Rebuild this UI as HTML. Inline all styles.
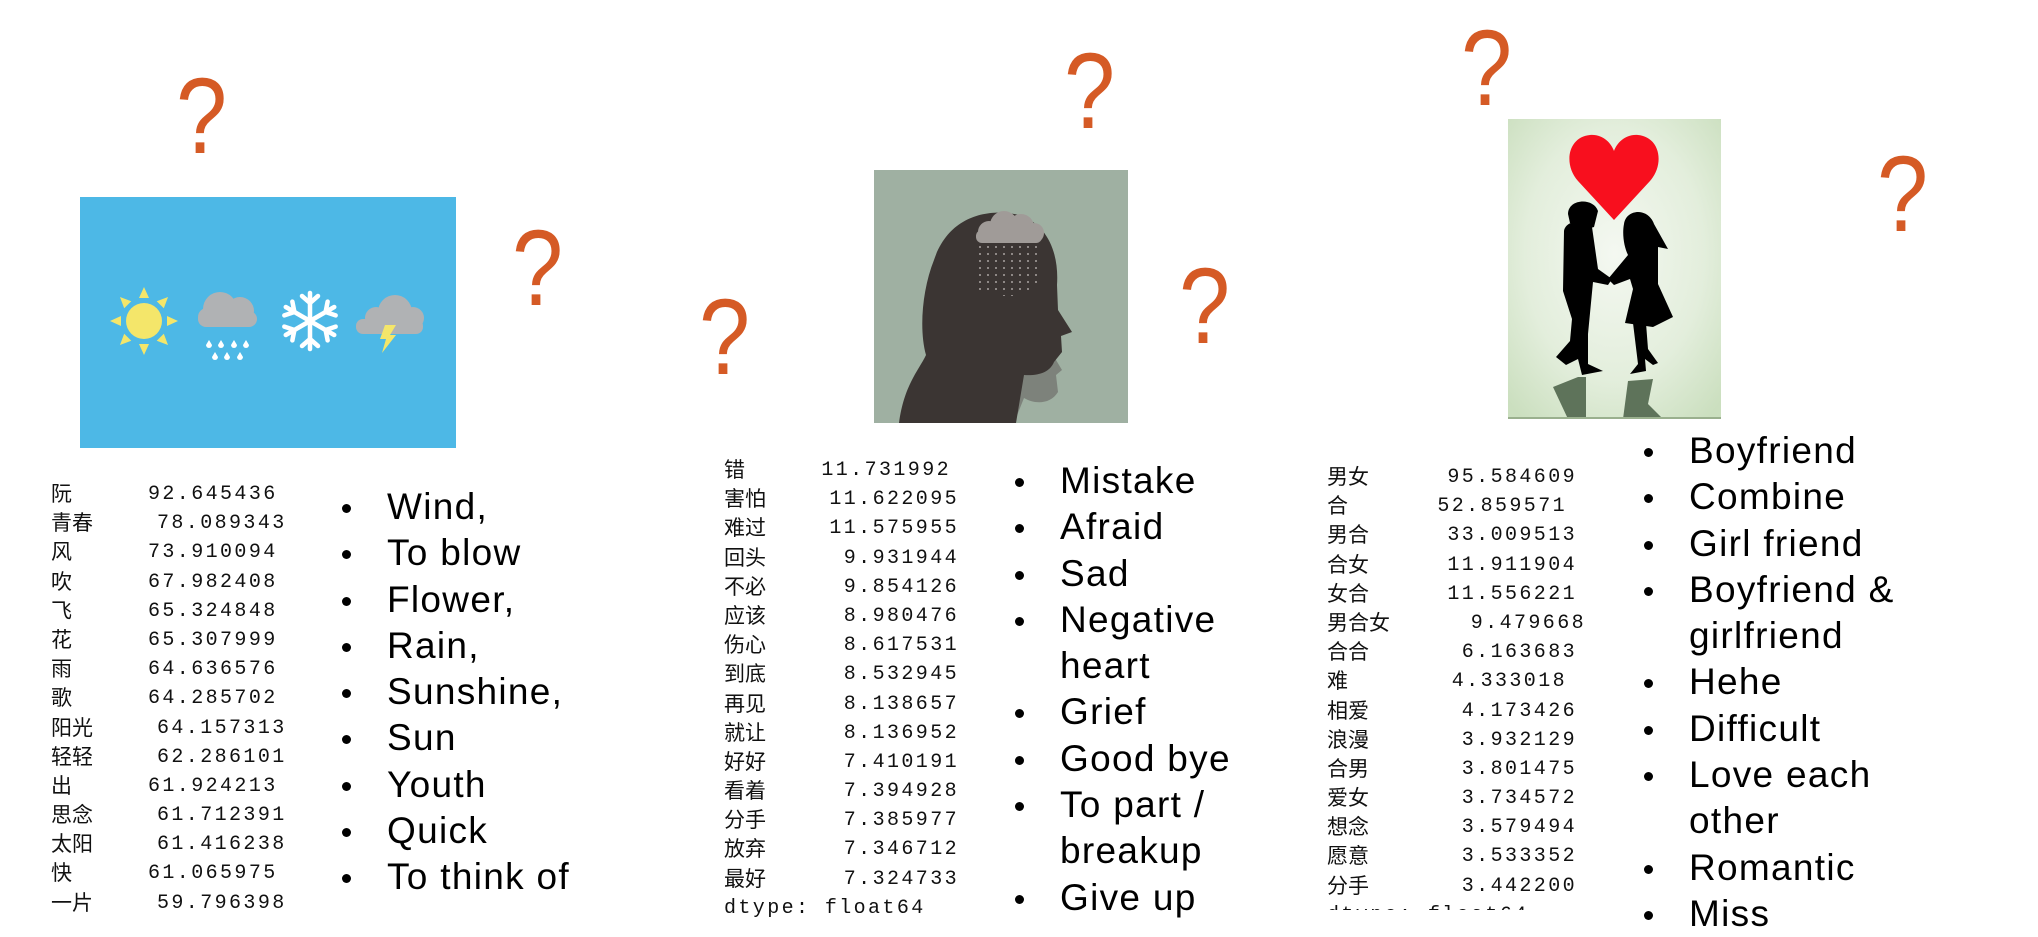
<!DOCTYPE html>
<html><head><meta charset="utf-8"><style>
html,body{margin:0;padding:0;background:#fff;}
body{width:2038px;height:934px;position:relative;overflow:hidden;}
.q{position:absolute;font-family:"Liberation Sans",sans-serif;font-size:108px;color:#d55a25;line-height:1;transform:scaleX(0.85);transform-origin:left top;}
.tbl{position:absolute;font-size:20px;line-height:29.2px;color:#111;}
.tbl div{position:relative;height:29.2px;white-space:nowrap;}
.tbl .c{position:absolute;left:0;font-family:"Liberation Sans","Noto Sans CJK SC",sans-serif;font-size:21px;}
.tbl .n{position:absolute;font-family:"Liberation Mono",monospace;font-size:20px;letter-spacing:2.4px;}
.b{position:absolute;font-family:"Liberation Sans",sans-serif;font-size:37px;color:#000;line-height:46.3px;letter-spacing:1.3px;}
.b div{position:relative;padding-left:45px;height:46.3px;white-space:nowrap;}
.b .d::before{content:"";position:absolute;left:0;top:20px;width:9px;height:9px;border-radius:50%;background:#000;}
</style></head><body>

<div class="q" style="left:176px;top:62px;">?</div>
<div class="q" style="left:512px;top:214px;">?</div>
<div class="q" style="left:699px;top:283px;">?</div>
<div class="q" style="left:1064px;top:37px;">?</div>
<div class="q" style="left:1179px;top:252px;">?</div>
<div class="q" style="left:1461px;top:14px;">?</div>
<div class="q" style="left:1877px;top:140px;">?</div>

<!-- weather -->
<svg style="position:absolute;left:80px;top:197px" width="376" height="251" viewBox="0 0 376 251">
<rect width="376" height="251" fill="#4db8e6"/>
<g transform="translate(64,124)" fill="#f4e66a">
<circle r="18"/>
<g id="ray"><polygon points="-5,-23 5,-23 0,-34"/></g>
<use href="#ray" transform="rotate(45)"/><use href="#ray" transform="rotate(90)"/><use href="#ray" transform="rotate(135)"/>
<use href="#ray" transform="rotate(180)"/><use href="#ray" transform="rotate(225)"/><use href="#ray" transform="rotate(270)"/><use href="#ray" transform="rotate(315)"/>
</g>
<g fill="#b0b2b4">
<circle cx="140" cy="112" r="17"/><circle cx="160" cy="114" r="14"/><circle cx="127" cy="120" r="9"/>
<rect x="118" y="114" width="59" height="16" rx="8"/>
<circle cx="315" cy="115" r="17"/><circle cx="333" cy="121" r="11"/><circle cx="296" cy="121" r="11"/>
<rect x="276" y="122" width="67" height="15" rx="7"/>
</g>
<g fill="#fff">
<path d="M129,143 l3,5 a3,3 0 1 1 -6,0 z"/><path d="M141,143 l3,5 a3,3 0 1 1 -6,0 z"/><path d="M154,143 l3,5 a3,3 0 1 1 -6,0 z"/><path d="M166,143 l3,5 a3,3 0 1 1 -6,0 z"/>
<path d="M135,155 l3,5 a3,3 0 1 1 -6,0 z"/><path d="M147,155 l3,5 a3,3 0 1 1 -6,0 z"/><path d="M160,155 l3,5 a3,3 0 1 1 -6,0 z"/>
</g>
<polygon points="305,128 316,128 310,138 316,138 302,156 306,142 300,142" fill="#f4e66a"/>
<g transform="translate(230,124)" stroke="#fff" stroke-width="4.5" stroke-linecap="round" fill="none">
<g id="arm"><line x1="0" y1="0" x2="0" y2="-28"/><polyline points="-8,-25 0,-18 8,-25"/></g>
<use href="#arm" transform="rotate(60)"/><use href="#arm" transform="rotate(120)"/><use href="#arm" transform="rotate(180)"/><use href="#arm" transform="rotate(240)"/><use href="#arm" transform="rotate(300)"/>
</g>
</svg>

<!-- head -->
<svg style="position:absolute;left:874px;top:170px" width="254" height="253" viewBox="0 0 254 253">
<rect width="254" height="253" fill="#9fb0a2"/>
<path d="M150,120 C170,130 180,160 176,180 L188,200 L182,205 L184,222 C176,235 160,234 150,228 L140,253 L80,253 Z" fill="#7d827b"/>
<path d="M25,253 C30,215 45,200 52,185 C45,160 48,120 60,90 C75,45 115,38 145,45 C175,55 185,85 183,115 L184,140 L198,162 L187,166 L188,182 L180,192 C176,202 165,206 150,205 L142,253 Z" fill="#3b3533"/>
<g fill="#a09b98"><circle cx="115" cy="62" r="11"/><circle cx="130" cy="55" r="14"/><circle cx="147" cy="57" r="13"/><circle cx="160" cy="63" r="10"/><rect x="102" y="60" width="66" height="13" rx="6"/></g>
<g stroke="#a9a4a1" stroke-width="1.5" stroke-dasharray="2 5"><line x1="106" y1="76" x2="106" y2="120"/><line x1="114" y1="76" x2="114" y2="122"/><line x1="122" y1="76" x2="122" y2="124"/><line x1="130" y1="76" x2="130" y2="126"/><line x1="138" y1="76" x2="138" y2="126"/><line x1="146" y1="76" x2="146" y2="124"/><line x1="154" y1="76" x2="154" y2="122"/><line x1="162" y1="76" x2="162" y2="114"/></g>
</svg>

<!-- love -->
<svg style="position:absolute;left:1508px;top:119px" width="213" height="300" viewBox="0 0 213 300">
<defs><radialGradient id="g" cx="50%" cy="45%" r="70%"><stop offset="0" stop-color="#f4f8f1"/><stop offset="0.6" stop-color="#e3eedc"/><stop offset="1" stop-color="#cbdfbf"/></radialGradient></defs>
<rect width="213" height="300" fill="url(#g)"/>
<path d="M106,101 L70,62 C55,45 60,18 82,16 C95,15 103,24 106,32 C109,24 117,15 130,16 C152,18 157,45 142,62 Z" fill="#f80f1e"/>
<g fill="#000">
<path d="M60,95 C60,80 85,78 90,92 L86,108 C80,110 70,108 62,104 Z"/>
<path d="M56,112 C58,100 80,100 84,108 L90,150 L104,160 L100,166 L85,163 L80,215 L80,245 L95,252 L74,256 L70,240 L58,246 L48,238 L62,222 L64,200 L55,172 Z"/>
<path d="M116,105 C118,90 140,88 146,105 L160,130 L150,128 L150,165 L165,198 L145,208 L117,204 L125,170 L122,160 L106,166 L100,160 L120,136 C116,128 114,115 116,105 Z"/>
<path d="M125,204 L130,245 L122,255 L138,252 L137,240 L145,246 L150,244 L140,230 L138,204 Z"/>
</g>
<g fill="#5e735a"><path d="M45,268 L70,258 L78,258 L78,300 L60,300 Z"/><path d="M120,262 L145,260 L140,285 L155,300 L115,300 Z"/></g>
<rect y="298" width="213" height="2" fill="#9ab08e"/>
</svg>

<!-- left table -->
<div class="tbl" style="left:51px;top:480px;">
<div><span class="c">阮</span><span class="n" style="left:97px">92.645436</span></div>
<div><span class="c">青春</span><span class="n" style="left:106px">78.089343</span></div>
<div><span class="c">风</span><span class="n" style="left:97px">73.910094</span></div>
<div><span class="c">吹</span><span class="n" style="left:97px">67.982408</span></div>
<div><span class="c">飞</span><span class="n" style="left:97px">65.324848</span></div>
<div><span class="c">花</span><span class="n" style="left:97px">65.307999</span></div>
<div><span class="c">雨</span><span class="n" style="left:97px">64.636576</span></div>
<div><span class="c">歌</span><span class="n" style="left:97px">64.285702</span></div>
<div><span class="c">阳光</span><span class="n" style="left:106px">64.157313</span></div>
<div><span class="c">轻轻</span><span class="n" style="left:106px">62.286101</span></div>
<div><span class="c">出</span><span class="n" style="left:97px">61.924213</span></div>
<div><span class="c">思念</span><span class="n" style="left:106px">61.712391</span></div>
<div><span class="c">太阳</span><span class="n" style="left:106px">61.416238</span></div>
<div><span class="c">快</span><span class="n" style="left:97px">61.065975</span></div>
<div><span class="c">一片</span><span class="n" style="left:106px">59.796398</span></div>
</div>

<div class="b" style="left:342px;top:484px;">
<div class="d">Wind,</div><div class="d">To blow</div><div class="d">Flower,</div><div class="d">Rain,</div><div class="d">Sunshine,</div><div class="d">Sun</div><div class="d">Youth</div><div class="d">Quick</div><div class="d">To think of</div>
</div>

<!-- middle table -->
<div class="tbl" style="left:724px;top:456px;width:235px;">
<div><span class="c">错</span><span class="n" style="right:8px">11.731992</span></div>
<div><span class="c">害怕</span><span class="n" style="right:0">11.622095</span></div>
<div><span class="c">难过</span><span class="n" style="right:0">11.575955</span></div>
<div><span class="c">回头</span><span class="n" style="right:0">9.931944</span></div>
<div><span class="c">不必</span><span class="n" style="right:0">9.854126</span></div>
<div><span class="c">应该</span><span class="n" style="right:0">8.980476</span></div>
<div><span class="c">伤心</span><span class="n" style="right:0">8.617531</span></div>
<div><span class="c">到底</span><span class="n" style="right:0">8.532945</span></div>
<div><span class="c">再见</span><span class="n" style="right:0">8.138657</span></div>
<div><span class="c">就让</span><span class="n" style="right:0">8.136952</span></div>
<div><span class="c">好好</span><span class="n" style="right:0">7.410191</span></div>
<div><span class="c">看着</span><span class="n" style="right:0">7.394928</span></div>
<div><span class="c">分手</span><span class="n" style="right:0">7.385977</span></div>
<div><span class="c">放弃</span><span class="n" style="right:0">7.346712</span></div>
<div><span class="c">最好</span><span class="n" style="right:0">7.324733</span></div>
<div><span class="n" style="left:0">dtype: float64</span></div>
</div>

<div class="b" style="left:1015px;top:458px;">
<div class="d">Mistake</div><div class="d">Afraid</div><div class="d">Sad</div><div class="d">Negative</div><div>heart</div><div class="d">Grief</div><div class="d">Good bye</div><div class="d">To part /</div><div>breakup</div><div class="d">Give up</div>
</div>

<!-- right table -->
<div class="tbl" style="left:1327px;top:463px;width:250px;">
<div><span class="c">男女</span><span class="n" style="right:0">95.584609</span></div>
<div><span class="c">合</span><span class="n" style="right:10px">52.859571</span></div>
<div><span class="c">男合</span><span class="n" style="right:0">33.009513</span></div>
<div><span class="c">合女</span><span class="n" style="right:0">11.911904</span></div>
<div><span class="c">女合</span><span class="n" style="right:0">11.556221</span></div>
<div><span class="c">男合女</span><span class="n" style="right:-9px">9.479668</span></div>
<div><span class="c">合合</span><span class="n" style="right:0">6.163683</span></div>
<div><span class="c">难</span><span class="n" style="right:10px">4.333018</span></div>
<div><span class="c">相爱</span><span class="n" style="right:0">4.173426</span></div>
<div><span class="c">浪漫</span><span class="n" style="right:0">3.932129</span></div>
<div><span class="c">合男</span><span class="n" style="right:0">3.801475</span></div>
<div><span class="c">爱女</span><span class="n" style="right:0">3.734572</span></div>
<div><span class="c">想念</span><span class="n" style="right:0">3.579494</span></div>
<div><span class="c">愿意</span><span class="n" style="right:0">3.533352</span></div>
<div><span class="c">分手</span><span class="n" style="right:0">3.442200</span></div>
<div style="height:9px;overflow:hidden;"><span class="n" style="left:0">dtype: float64</span></div>
</div>

<div class="b" style="left:1644px;top:428px;">
<div class="d">Boyfriend</div><div class="d">Combine</div><div class="d">Girl friend</div><div class="d">Boyfriend &amp;</div><div>girlfriend</div><div class="d">Hehe</div><div class="d">Difficult</div><div class="d">Love each</div><div>other</div><div class="d">Romantic</div><div class="d">Miss</div>
</div>

</body></html>
